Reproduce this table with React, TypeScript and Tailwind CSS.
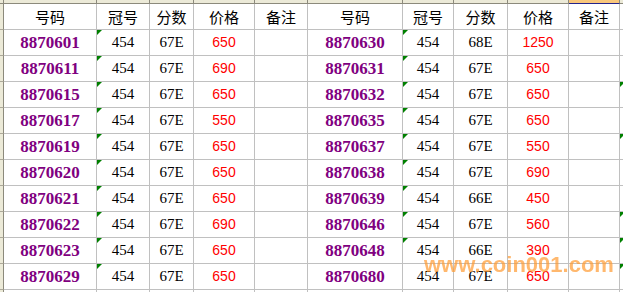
import React from "react";

type Row = { id: string; g: string; s: string; p: string; tri: boolean };

const left: Row[] = [
  { id: "8870601", g: "454", s: "67E", p: "650", tri: true },
  { id: "8870611", g: "454", s: "67E", p: "690", tri: true },
  { id: "8870615", g: "454", s: "67E", p: "650", tri: true },
  { id: "8870617", g: "454", s: "67E", p: "550", tri: true },
  { id: "8870619", g: "454", s: "67E", p: "650", tri: true },
  { id: "8870620", g: "454", s: "67E", p: "650", tri: true },
  { id: "8870621", g: "454", s: "67E", p: "650", tri: true },
  { id: "8870622", g: "454", s: "67E", p: "690", tri: true },
  { id: "8870623", g: "454", s: "67E", p: "650", tri: true },
  { id: "8870629", g: "454", s: "67E", p: "650", tri: true },
];

const right: Row[] = [
  { id: "8870630", g: "454", s: "68E", p: "1250", tri: true },
  { id: "8870631", g: "454", s: "67E", p: "650", tri: true },
  { id: "8870632", g: "454", s: "67E", p: "650", tri: true },
  { id: "8870635", g: "454", s: "67E", p: "650", tri: true },
  { id: "8870637", g: "454", s: "67E", p: "550", tri: true },
  { id: "8870638", g: "454", s: "67E", p: "690", tri: true },
  { id: "8870639", g: "454", s: "66E", p: "450", tri: true },
  { id: "8870646", g: "454", s: "67E", p: "560", tri: true },
  { id: "8870648", g: "454", s: "66E", p: "390", tri: true },
  { id: "8870680", g: "454", s: "67E", p: "650", tri: false },
];

const edgeTri = [false, false, true, false, true, false, false, true, true, true];

const widths = [93, 53, 44, 61, 53, 95, 51, 54, 61, 51];

const cell =
  "relative h-[26px] border-r border-b border-[#c0c0c0] text-center leading-[25px] whitespace-nowrap overflow-hidden";
const serif = "font-['Liberation_Serif',serif]";
const cjk = "font-['Noto_Sans_CJK_SC','Noto_Sans',sans-serif]";

function Tri() {
  return (
    <span className="absolute top-0 left-0 w-0 h-0 border-t-[5px] border-t-[#008000] border-r-[5px] border-r-transparent" />
  );
}

function Strip() {
  return (
    <div className="h-[26px] w-[4px] shrink-0 bg-[#ecead8] border-r border-b border-r-[#8c8a7c] border-b-[#aca899]" />
  );
}

function Half({ r }: { r: Row }) {
  return (
    <>
      <div className={`${cell} w-[93px] ${serif} text-[17px] font-bold text-[#800080]`}>{r.id}</div>
      <div className={`${cell} w-[53px] ${serif} text-[15px] text-black`}>
        {r.tri && <Tri />}
        {r.g}
      </div>
      <div className={`${cell} w-[44px] ${serif} text-[15px] text-black`}>{r.s}</div>
      <div className={`${cell} w-[61px] font-['Liberation_Sans',sans-serif] text-[14px] text-[#ff0000]`}>{r.p}</div>
    </>
  );
}

function HeaderHalf({ first }: { first: boolean }) {
  const labels = ["号码", "冠号", "分数", "价格", "备注"];
  const ws = first ? ["w-[93px]", "w-[53px]", "w-[44px]", "w-[61px]", "w-[53px]"] : ["w-[95px]", "w-[51px]", "w-[54px]", "w-[61px]", "w-[51px]"];
  return (
    <>
      {labels.map((l, i) => (
        <div key={l + i} className={`${cell} ${ws[i]} ${cjk} text-[15px] text-black`}>
          {l}
        </div>
      ))}
    </>
  );
}

export default function App() {
  return (
    <div className="relative w-[623px] h-[292px] overflow-hidden bg-white">
      {/* column header strip */}
      <div className="flex h-[4px]">
        <div className="w-[4px] h-[4px] bg-[#ecead8] border-r border-b border-[#8c8a7c]" />
        {widths.map((w, i) => (
          <div
            key={i}
            style={{ width: w }}
            className={
              i === 9
                ? "h-[4px] bg-[#f9c77c] border-r border-b border-r-[#8c8a7c] border-b-[#24248c]"
                : "h-[4px] bg-[#ecead8] border-r border-b border-[#8c8a7c]"
            }
          />
        ))}
        <div className="w-[3px] h-[4px] bg-[#ecead8] border-b border-[#8c8a7c]" />
      </div>

      {/* header row */}
      <div className="flex">
        <Strip />
        <HeaderHalf first />
        <HeaderHalf first={false} />
        <div className="h-[26px] w-[3px] border-b border-[#c0c0c0]" />
      </div>

      {left.map((l, i) => {
        const r = right[i];
        return (
          <div className="flex" key={l.id}>
            <Strip />
            <Half r={l} />
            <div className={`${cell} w-[53px]`} />
            <div className={`${cell} w-[95px] ${serif} text-[17px] font-bold text-[#800080]`}>{r.id}</div>
            <div className={`${cell} w-[51px] ${serif} text-[15px] text-black`}>
              {r.tri && <Tri />}
              {r.g}
            </div>
            <div className={`${cell} w-[54px] ${serif} text-[15px] text-black`}>{r.s}</div>
            <div className={`${cell} w-[61px] font-['Liberation_Sans',sans-serif] text-[14px] text-[#ff0000]`}>{r.p}</div>
            <div className={`${cell} w-[51px]`} />
            <div className="relative h-[26px] w-[3px] border-b border-[#c0c0c0]">{edgeTri[i] && <Tri />}</div>
          </div>
        );
      })}

      <div className="flex">
        <Strip />
        {widths.map((w, i) => (
          <div key={i} style={{ width: w }} className="h-[26px] border-r border-b border-[#c0c0c0]" />
        ))}
      </div>

      {/* watermark overlay */}
      <div className="absolute left-[424px] top-[254px] font-['Liberation_Sans',sans-serif] font-bold text-[22px] leading-[22px] text-[#ff9a30]/70 blur-[0.7px] whitespace-nowrap pointer-events-none">
        www.coin001.com
      </div>
    </div>
  );
}
